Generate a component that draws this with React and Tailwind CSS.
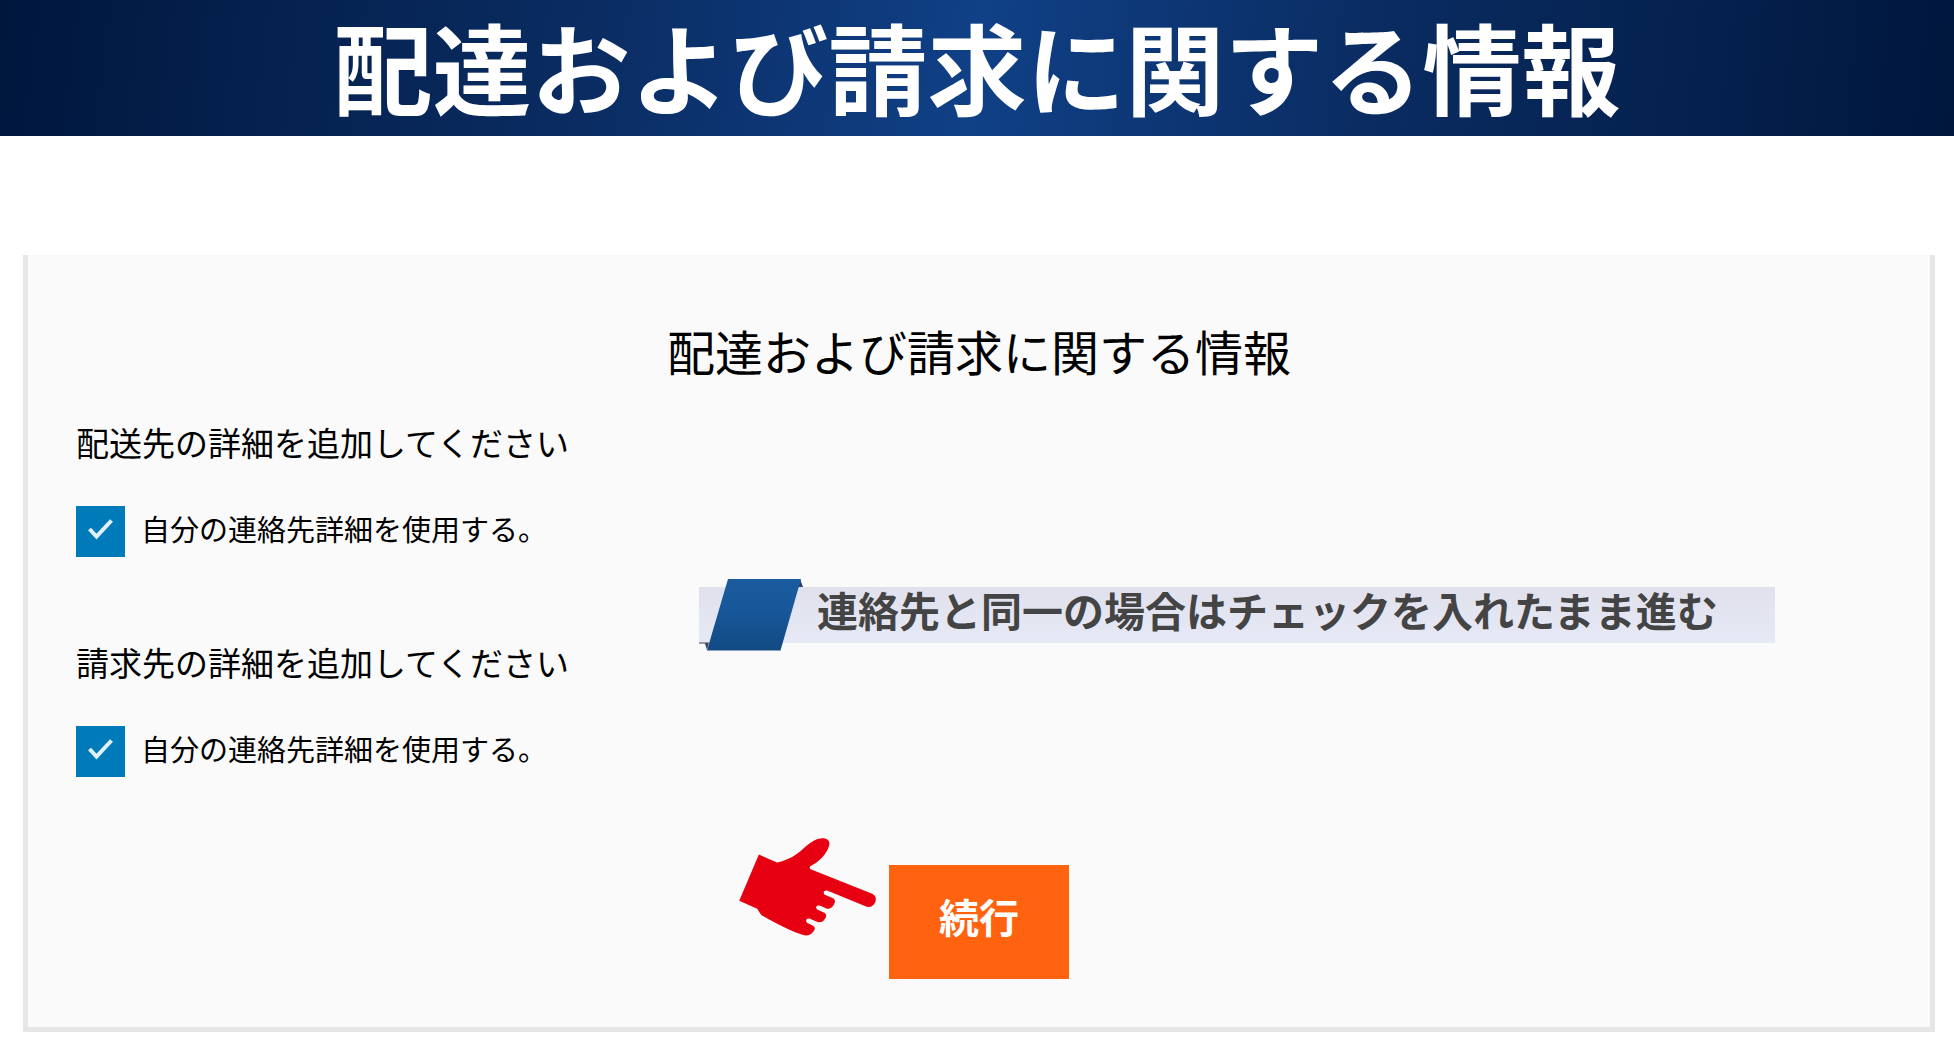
import React from "react";

const sections = [
  { id: "delivery", title: "配送先の詳細を追加してください" },
  { id: "billing", title: "請求先の詳細を追加してください" },
];

function ContactOption({ id, title }) {
  return (
    <section>
      <h3 className="text-[33px] leading-10">{title}</h3>
      <div className="mt-11 flex items-center gap-4">
        <div className="grid shrink-0">
          <input
            id={id}
            type="checkbox"
            defaultChecked
            className="peer col-start-1 row-start-1 h-[51px] w-[49px] appearance-none border border-[#007ab8] bg-white checked:bg-[#007ab8]"
          />
          <svg
            viewBox="0 0 49 51"
            className="pointer-events-none invisible col-start-1 row-start-1 h-[51px] w-[49px] peer-checked:visible"
            fill="none"
            stroke="#e1f1f9"
            strokeWidth="4"
          >
            <path d="M13.500 23 L20.500 30.500 L35.500 14.500" />
          </svg>
        </div>
        <label htmlFor={id} className="pb-2 text-[29px] leading-10">
          自分の連絡先詳細を使用する。
        </label>
      </div>
    </section>
  );
}

function Ribbon() {
  return (
    <div className="flex h-14 items-center bg-linear-to-b from-[#e0e1ed] to-[#e7e9f6]">
      <svg viewBox="0 0 106 72" className="h-[72px] w-[106px] shrink-0">
        <defs>
          <linearGradient id="tab" x1="0" y1="0" x2="0" y2="1">
            <stop offset="0" stopColor="#195b9d" />
            <stop offset="0.4" stopColor="#18589a" />
            <stop offset="1" stopColor="#124a83" />
          </linearGradient>
        </defs>
        <path d="M101 0 L104 8 L97 8 Z" fill="#2f3f6f" />
        <path d="M0 63.5 H10 L8 71 L6 64.5 H0 Z" fill="#3c4560" />
        <path d="M29 0 H102 L81.500 71.500 H8 Z" fill="url(#tab)" />
      </svg>
      <p className="ml-3 pb-3 text-[41px] leading-[48px] font-bold whitespace-nowrap text-[#444444]">
        連絡先と同一の場合はチェックを入れたまま進む
      </p>
    </div>
  );
}

function PointingHand() {
  return (
    <svg viewBox="0 0 414 298" className="h-[99px] w-[138px]" fill="#e60012">
      <path d="M59 53 L114 77 C150 69 172 54 194 34 C220 10 240 2 254 4 C270 6 274 16 270 28 C264 50 242 74 214 88 C210 92 213 96 217 98 L400 171 C412 177 414 188 408 199 C402 210 392 213 382 209 L270 163 C260 158 250 163 256 173 L284 185 C290 190 289 198 284 205 C278 216 270 218 262 215 L244 207 C234 203 226 211 236 219 L258 229 C264 235 262 243 256 249 C250 257 242 258 234 255 L218 248 C208 242 196 248 204 258 L222 267 C230 272 228 280 222 286 C214 297 202 298 190 294 C150 281 108 259 68 236 C62 230 58 222 54 216 L0 192 Z" />
    </svg>
  );
}

export default function App() {
  return (
    <div className="bg-white font-['Noto_Sans_CJK_JP',sans-serif] text-black">
      <header className="flex h-[136px] items-center justify-center bg-[linear-gradient(97deg,#00173d,#0a2c62_30%,#104086_50%,#0a2c62_70%,#00173d)]">
        <h1 className="pt-3 font-['Liberation_Sans','Noto_Sans_CJK_JP',sans-serif] text-[99px] leading-[120px] font-bold whitespace-nowrap text-white">
          配達および請求に関する情報
        </h1>
      </header>

      <main className="pt-[119px] pr-[19px] pb-[15px] pl-[23px]">
        <form
          className="border-x-5 border-b-5 border-[#e6e6e6] bg-[#fafafa] px-12 pt-[63px] pb-12"
          onSubmit={(e) => e.preventDefault()}
        >
          <h2 className="text-center text-5xl leading-[64px]">
            配達および請求に関する情報
          </h2>

          <div className="mt-10 grid grid-cols-[623px_1fr] items-center">
            <div className="flex flex-col gap-[85px]">
              {sections.map((s) => (
                <ContactOption key={s.id} id={s.id} title={s.title} />
              ))}
            </div>
            <div className="pt-[30px] pr-[107px]">
              <Ribbon />
            </div>
          </div>

          {/* Continue */}
          <div className="mt-[60px] grid grid-cols-[1fr_auto_1fr] gap-3">
            <div className="justify-self-end">
              <PointingHand />
            </div>
            <button
              type="submit"
              className="mt-7 h-[114px] w-[180px] bg-[#ff6310] pb-3 text-[40px] leading-[48px] font-bold text-white"
            >
              続行
            </button>
          </div>
        </form>
      </main>
    </div>
  );
}
